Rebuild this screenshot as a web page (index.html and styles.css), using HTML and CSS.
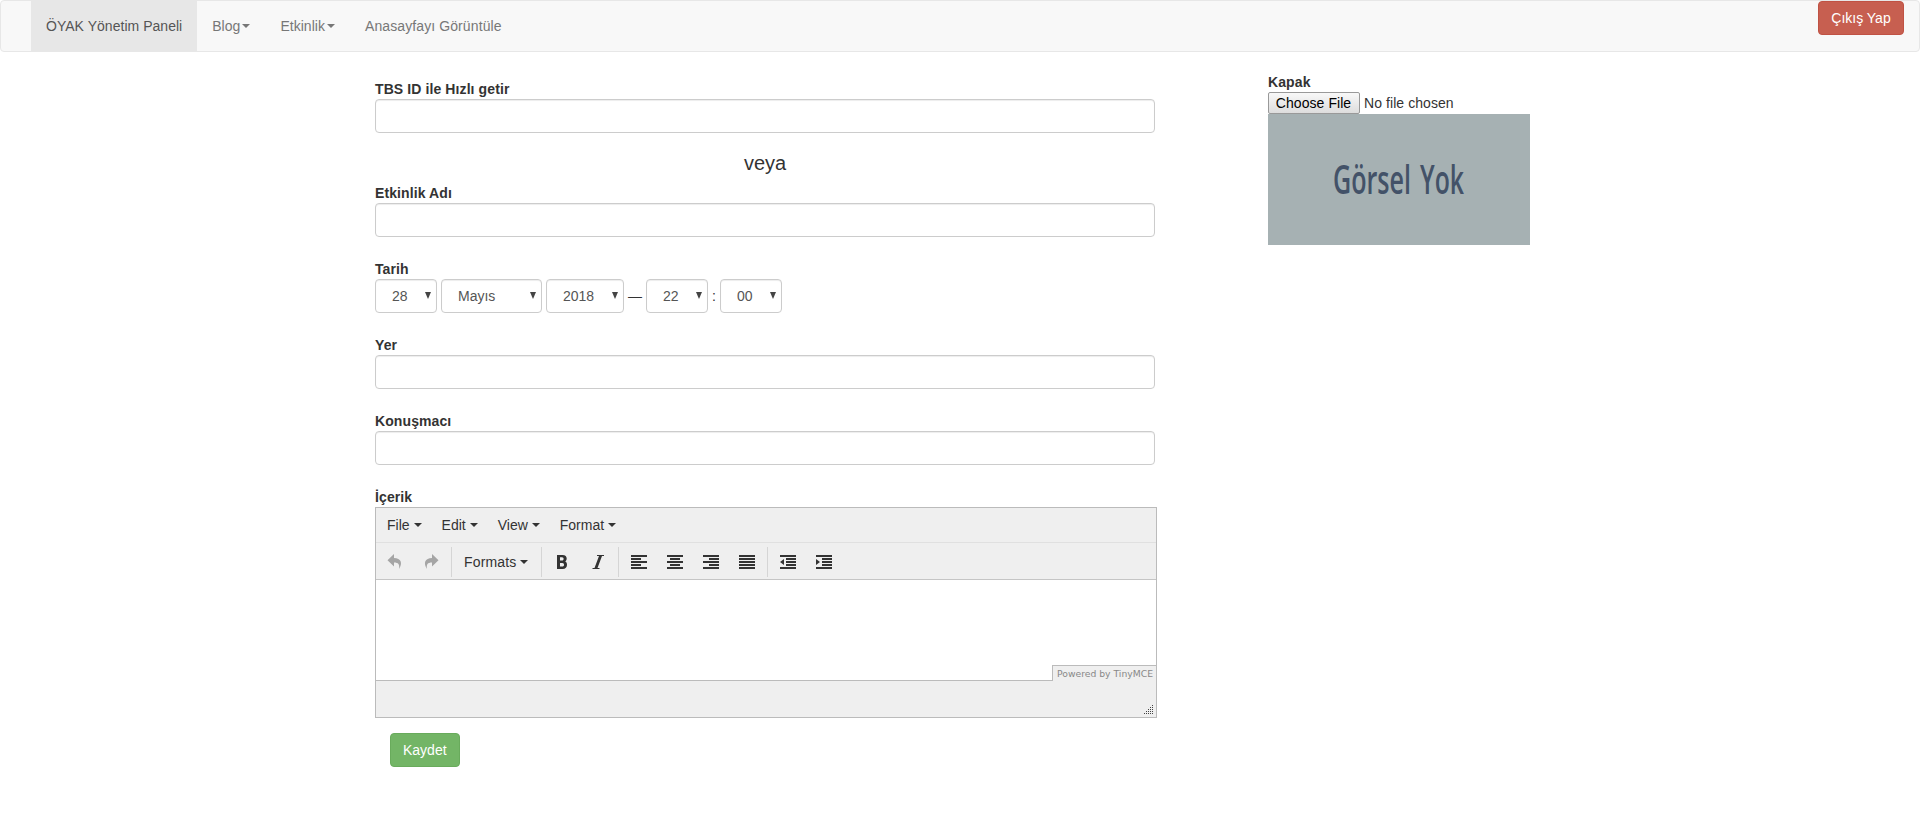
FILE: index.html
```html
<!DOCTYPE html>
<html lang="tr">
<head>
<meta charset="utf-8">
<title>ÖYAK Yönetim Paneli</title>
<link rel="stylesheet" href="styles.css">
</head>
<body>
<nav class="navbar">
  <a class="nav-item active">ÖYAK Yönetim Paneli</a>
  <a class="nav-item">Blog<i class="caret"></i></a>
  <a class="nav-item">Etkinlik<i class="caret"></i></a>
  <a class="nav-item wide">Anasayfayı Görüntüle</a>
  <button class="btn btn-danger">Çıkış Yap</button>
</nav>
<div class="page">
  <main class="form">
    <div class="field quick"><label>TBS ID ile Hızlı getir</label><input class="control" type="text"></div>
    <div class="or">veya</div>
    <div class="field"><label>Etkinlik Adı</label><input class="control" type="text"></div>
    <div class="field">
      <label>Tarih</label>
      <div class="dates">
        <div class="select day">28<svg width="6" height="7"><path d="M0 0H6L3 7Z"/></svg></div>
        <div class="select month">Mayıs<svg width="6" height="7"><path d="M0 0H6L3 7Z"/></svg></div>
        <div class="select year">2018<svg width="6" height="7"><path d="M0 0H6L3 7Z"/></svg></div>
        <span>—</span>
        <div class="select day">22<svg width="6" height="7"><path d="M0 0H6L3 7Z"/></svg></div>
        <span>:</span>
        <div class="select day">00<svg width="6" height="7"><path d="M0 0H6L3 7Z"/></svg></div>
      </div>
    </div>
    <div class="field"><label>Yer</label><input class="control" type="text"></div>
    <div class="field"><label>Konuşmacı</label><input class="control" type="text"></div>
    <label>İçerik</label>
    <div class="editor">
      <div class="menubar">
        <span>File<i class="caret"></i></span><span>Edit<i class="caret"></i></span><span>View<i class="caret"></i></span><span>Format<i class="caret"></i></span>
      </div>
      <div class="toolbar">
        <div class="group history">
          <svg class="muted" width="16" height="16"><path d="M7 0V4C14 4 16 9 12 15C12.800 10.500 11.500 8.500 7 8.500V12.500L0.500 6.200Z"/></svg>
          <svg class="muted" width="16" height="16"><path d="M9 0V4C2 4 0 9 4 15C3.200 10.500 4.500 8.500 9 8.500V12.500L15.500 6.200Z"/></svg>
        </div>
        <div class="group formats">Formats<i class="caret"></i></div>
        <div class="group style">
          <svg width="16" height="16"><path fill-rule="evenodd" d="M3 1H8.500C11.500 1 12.700 2.500 12.700 4.600C12.700 6 12 7 11.200 7.500C12.500 8 13 9.300 13 10.800C13 13.500 11.500 15 8.500 15H3ZM6 3.300V6.600H8C10.200 6.600 10.200 3.300 8 3.300ZM6 8.900V12.600H8.200C10.700 12.600 10.700 8.900 8.200 8.900Z"/></svg>
          <svg width="16" height="16"><path d="M7 1H14V2H12L7.500 14H9.500V15H2.500V14H4.500L9 2H7Z"/></svg>
        </div>
        <div class="group align">
          <svg width="16" height="16"><path d="M0 1H16V3H0ZM0 4H10V6H0ZM0 7H16V9H0ZM0 10H10V12H0ZM0 13H16V15H0Z"/></svg>
          <svg width="16" height="16"><path d="M0 1H16V3H0ZM3 4H13V6H3ZM0 7H16V9H0ZM3 10H13V12H3ZM0 13H16V15H0Z"/></svg>
          <svg width="16" height="16"><path d="M0 1H16V3H0ZM6 4H16V6H6ZM0 7H16V9H0ZM6 10H16V12H6ZM0 13H16V15H0Z"/></svg>
          <svg width="16" height="16"><path d="M0 1H16V3H0ZM0 4H16V6H0ZM0 7H16V9H0ZM0 10H16V12H0ZM0 13H16V15H0Z"/></svg>
        </div>
        <div class="group indent">
          <svg width="16" height="16"><path d="M0 1H16V3H0ZM6 4H16V6H6ZM6 7H16V9H6ZM6 10H16V12H6ZM0 13H16V15H0ZM4 5V11L0 8Z"/></svg>
          <svg width="16" height="16"><path d="M0 1H16V3H0ZM6 4H16V6H6ZM6 7H16V9H6ZM6 10H16V12H6ZM0 13H16V15H0ZM0 5V11L4 8Z"/></svg>
        </div>
      </div>
      <div class="content"></div>
      <div class="status">
        <div class="powered"><svg width="97" height="12"><text x="0" y="9" textLength="96" lengthAdjust="spacingAndGlyphs">Powered by TinyMCE</text></svg></div>
        <svg class="grip" width="10" height="10"><path d="M8 0h1v1h-1zM8 2h1v1h-1zM6 2h1v1h-1zM8 4h1v1h-1zM6 4h1v1h-1zM4 4h1v1h-1zM8 6h1v1h-1zM6 6h1v1h-1zM4 6h1v1h-1zM2 6h1v1h-1zM8 8h1v1h-1zM6 8h1v1h-1zM4 8h1v1h-1zM2 8h1v1h-1zM0 8h1v1h-1z"/></svg>
      </div>
    </div>
    <button class="btn btn-success">Kaydet</button>
  </main>
  <aside class="cover">
    <label>Kapak</label>
    <div class="file"><span class="choose">Choose File</span><span>No file chosen</span></div>
    <svg class="placeholder" width="262" height="131"><text x="65" y="80" textLength="78" lengthAdjust="spacingAndGlyphs">Görsel</text><text x="152" y="80" textLength="44" lengthAdjust="spacingAndGlyphs">Yok</text></svg>
  </aside>
</div>
</body>
</html>
```
FILE: styles.css
```css
* { box-sizing: border-box; }
body { margin: 0; background: #fff; color: #333; font: 14px/20px "Liberation Sans", Arial, sans-serif; }
svg { display: block; flex: none; }
label { display: block; height: 20px; font-weight: bold; letter-spacing: .1px; }

.navbar { display: flex; height: 52px; padding: 0 15px 0 30px; background: #f8f8f8; border: 1px solid #e7e7e7; border-radius: 4px; }
.nav-item { display: flex; align-items: center; height: 50px; padding: 0 15px; color: #777; letter-spacing: .03px; }
.nav-item.active { background: #e7e7e7; color: #555; }
.nav-item.wide { letter-spacing: .1px; }
.caret { display: inline-block; border-top: 4px solid; border-left: 4px solid transparent; border-right: 4px solid transparent; }
.nav-item .caret { margin-left: 2px; }

.btn { height: 34px; padding: 0 12px; border: 1px solid; border-radius: 4px; color: #fff; font: inherit; }
.btn-danger { width: 86px; padding: 0; margin-left: auto; background: #c75f50; border-color: #c05244; }
.btn-success { display: block; margin: 15px 0 0 15px; background: #73b566; border-color: #69ab5c; }

.page { display: flex; gap: 111px; padding: 20px 0 0 375px; }
.form { width: 782px; padding-top: 7px; }
.field { width: 780px; margin-bottom: 22px; }
.control { display: block; width: 100%; height: 34px; border: 1px solid #ccc; border-radius: 4px; box-shadow: inset 0 1px 1px rgba(0,0,0,.075); background: #fff; }
.quick { margin-bottom: 16px; }
.or { width: 780px; height: 34px; line-height: 28px; font-size: 20px; text-align: center; }
.dates { display: flex; align-items: center; gap: 4px; }
.select { display: flex; align-items: center; justify-content: space-between; height: 34px; padding: 0 5px 0 16px; border: 1px solid #ccc; border-radius: 4px; box-shadow: inset 0 1px 1px rgba(0,0,0,.075); color: #555; }
.select svg { fill: #444; margin-top: -2px; }
.day { width: 62px; }
.month { width: 101px; }
.year { width: 78px; }

.editor { width: 782px; border: 1px solid #bbb; }
.menubar { display: flex; gap: 20px; height: 35px; padding: 7px 11px; background: #efefef; border-bottom: 1px solid #e0e0e0; }
.menubar .caret, .formats .caret { margin-left: 4px; vertical-align: 3px; }
.toolbar { display: flex; height: 37px; padding: 4px 0 2px; background: #efefef; border-bottom: 1px solid #c5c5c5; fill: #333; }
.group { display: flex; align-items: center; height: 30px; gap: 20px; border-left: 1px solid #d5d5d5; padding-left: 12px; }
.history { width: 75px; border-left: 0; padding-left: 11px; }
.muted { fill: #a5a5a5; }
.formats { width: 90px; gap: 0; letter-spacing: .15px; }
.style { width: 77px; }
.align { width: 149px; }
.indent { width: 100px; }
.content { height: 100px; }
.status { position: relative; height: 37px; background: #efefef; border-top: 1px solid #bbb; }
.powered { position: absolute; right: 0; top: -16px; width: 104px; height: 16px; padding: 2px 0 0 4px; background: #efefef; border: 1px solid #bbb; border-width: 1px 0 0 1px; }
.powered text { font: 9.5px "DejaVu Sans", sans-serif; fill: #888; }
.grip { position: absolute; right: 2px; bottom: 2px; fill: #444; }

.cover { width: 262px; }
.file { display: flex; gap: 4px; height: 22px; line-height: 22px; }
.choose { width: 92px; height: 22px; padding-right: 1px; line-height: 20px; border: 1px solid #999; border-radius: 2px; text-align: center; color: #000; background: linear-gradient(#f8f8f8, #ddd); }
.file { letter-spacing: .07px; white-space: nowrap; }
.placeholder { background: #a6b1b3; }
.placeholder text { font: 600 39px "Open Sans", sans-serif; fill: #435268; }
```
